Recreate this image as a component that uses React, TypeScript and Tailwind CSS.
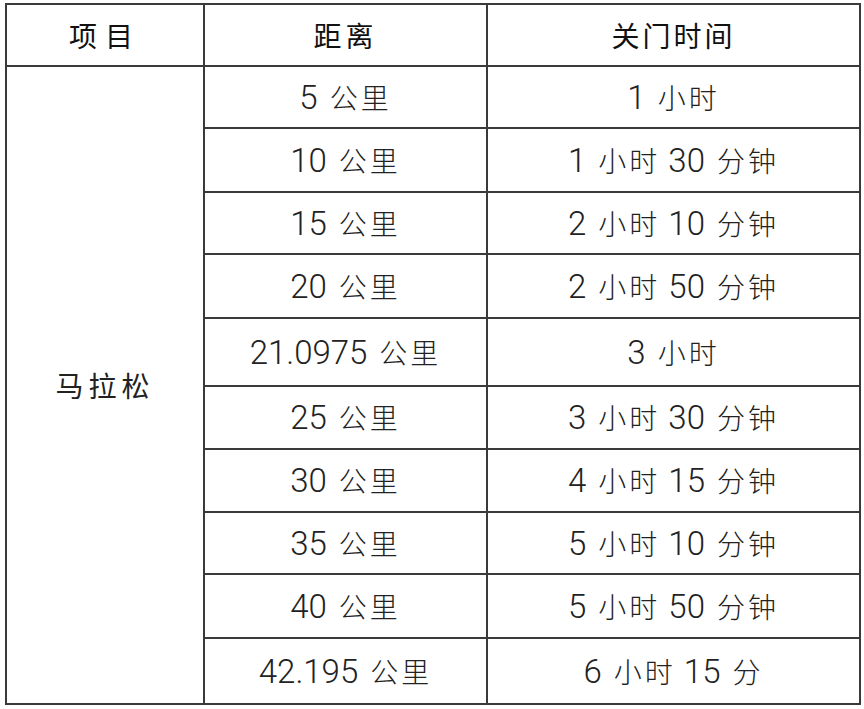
const rows: { dist: string; unit: string; time: [string, string][] }[] = [
  { dist: "5", unit: "公里", time: [["1", "小时"]] },
  { dist: "10", unit: "公里", time: [["1", "小时"], ["30", "分钟"]] },
  { dist: "15", unit: "公里", time: [["2", "小时"], ["10", "分钟"]] },
  { dist: "20", unit: "公里", time: [["2", "小时"], ["50", "分钟"]] },
  { dist: "21.0975", unit: "公里", time: [["3", "小时"]] },
  { dist: "25", unit: "公里", time: [["3", "小时"], ["30", "分钟"]] },
  { dist: "30", unit: "公里", time: [["4", "小时"], ["15", "分钟"]] },
  { dist: "35", unit: "公里", time: [["5", "小时"], ["10", "分钟"]] },
  { dist: "40", unit: "公里", time: [["5", "小时"], ["50", "分钟"]] },
  { dist: "42.195", unit: "公里", time: [["6", "小时"], ["15", "分"]] },
];

const heights = [62, 64, 62, 64, 68, 63, 63, 62, 64, 66];

function Num({ v }: { v: string }) {
  return (
    <span className="font-['Roboto',sans-serif] text-[33px] font-light">{v}</span>
  );
}

function Cjk({ v }: { v: string }) {
  return (
    <span className="ml-[12px] font-['Noto_Sans_CJK_SC',sans-serif] text-[28px] font-light tracking-[3px]">
      {v}
    </span>
  );
}

const cell = "border-2 border-[#3a3a3a] text-center align-middle";

export default function App() {
  return (
    <div className="w-[864px] h-[709px] bg-white pt-[3px] pl-[5px] text-[#222]">
      <table className="table-fixed border-collapse w-[854px]">
        <colgroup>
          <col className="w-[198px]" />
          <col className="w-[283px]" />
          <col className="w-[373px]" />
        </colgroup>
        <tbody>
          <tr className="h-[62px] font-['Noto_Sans_CJK_SC',sans-serif] text-[28px] text-[#111]">
            <td className={`${cell} tracking-[8px]`}>项目</td>
            <td className={`${cell} tracking-[4px]`}>距离</td>
            <td className={`${cell} tracking-[3px]`}>关门时间</td>
          </tr>
          {rows.map((r, i) => (
            <tr key={i} style={{ height: heights[i] }}>
              {i === 0 && (
                <td
                  rowSpan={rows.length}
                  className={`${cell} font-['Noto_Sans_CJK_SC',sans-serif] text-[28px] tracking-[5px]`}
                >
                  马拉松
                </td>
              )}
              <td className={`${cell} leading-none`}>
                <Num v={r.dist} />
                <Cjk v={r.unit} />
              </td>
              <td className={`${cell} leading-none`}>
                {r.time.map(([n, u], j) => (
                  <span key={j} className={j > 0 ? "ml-[8px]" : ""}>
                    <Num v={n} />
                    <Cjk v={u} />
                  </span>
                ))}
              </td>
            </tr>
          ))}
        </tbody>
      </table>
    </div>
  );
}
